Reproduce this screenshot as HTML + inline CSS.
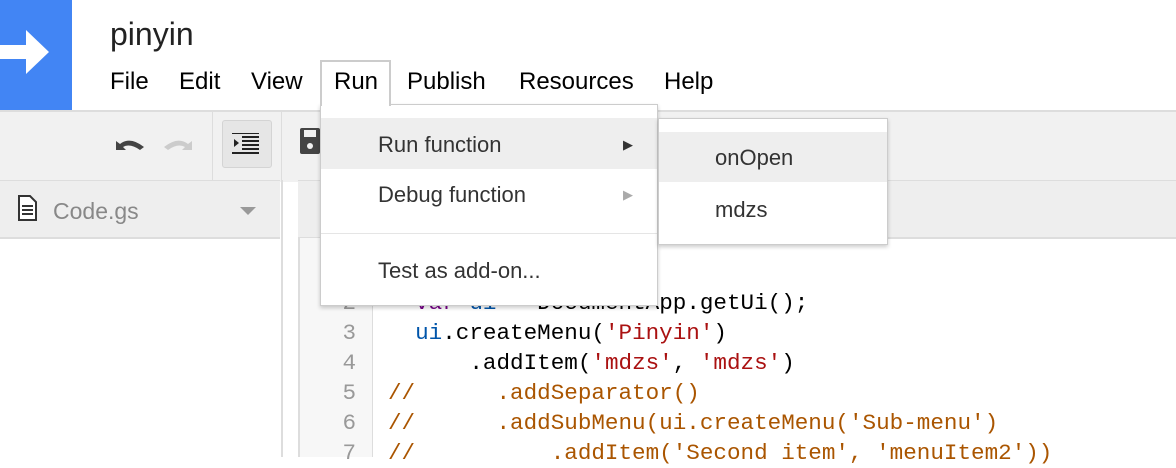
<!DOCTYPE html><html><head><style>
body{margin:0;width:1176px;height:457px;overflow:hidden;position:relative;background:#fff;font-family:"Liberation Sans",sans-serif}
.a{position:absolute}
.mono{font-family:"Liberation Mono","DejaVu Sans Mono",monospace;font-size:22.6px}
</style></head><body>
<div class="a" style="left:0;top:0;width:72px;height:110px;background:#4285f4"></div>
<svg class="a" style="left:0;top:28px" width="52" height="48"><path d="M0 17H26V2L49 24L26 46V31H0Z" fill="#fff"/></svg>
<div class="a" style="left:110px;top:16px;font-size:32px;color:#222">pinyin</div>
<div class="a" style="left:110px;top:68px;font-size:24px;color:#000">
<span class="a" style="left:0">File</span><span class="a" style="left:69px">Edit</span><span class="a" style="left:141px">View</span><span class="a" style="left:224px">Run</span><span class="a" style="left:297px">Publish</span><span class="a" style="left:409px">Resources</span><span class="a" style="left:554px">Help</span></div>
<div class="a" style="left:0;top:110px;width:1176px;height:70px;background:#f1f1f1;border-top:2px solid #ddd"></div>
<div class="a" style="left:212px;top:112px;width:1px;height:68px;background:#ddd"></div>
<div class="a" style="left:281px;top:112px;width:1px;height:68px;background:#ddd"></div>
<div class="a" style="left:0;top:180px;width:280px;height:56px;background:#eee;border-top:1px solid #ddd;border-bottom:2px solid #ddd"></div>
<div class="a" style="left:281px;top:180px;width:2px;height:277px;background:#ddd"></div>
<div class="a" style="left:298px;top:180px;width:878px;height:56px;background:#eee;border-top:1px solid #ddd;border-bottom:2px solid #ddd"></div>
<div class="a" style="left:298px;top:238px;width:72px;height:219px;background:#f7f7f7;border-left:2px solid #ddd;border-right:1px solid #ddd"></div>
<svg class="a" style="left:114px;top:134px" width="80" height="22"><path d="M2 16V7L6 10Q16 2 30 13L26 16Q16 9 9 13L12 16Z" fill="#444"/><path d="M78 16V7L74 10Q64 2 50 13L54 16Q64 9 71 13L68 16Z" fill="#ccc"/></svg>
<div class="a" style="left:222px;top:120px;width:50px;height:48px;background:#e6e6e6;border:1px solid #d4d4d4;border-radius:3px;box-sizing:border-box"></div>
<svg class="a" style="left:232px;top:133px" width="28" height="24"><path d="M0 0H27M10 4H27M10 8H27M10 12H27M10 16H27M0 20H27" stroke="#222" stroke-width="2"/><path d="M2 6L7 10L2 14Z" fill="#222"/></svg>
<svg class="a" style="left:300px;top:128px" width="20" height="28"><rect x="0" y="0" width="20" height="26" rx="2" fill="#444"/><rect x="4" y="2" width="12" height="7" fill="#f1f1f1"/><circle cx="10" cy="18" r="3" fill="#f1f1f1"/></svg>
<svg class="a" style="left:18px;top:195px" width="20" height="28"><path d="M1 1H12L18 7V25H1Z" fill="#fff" stroke="#333" stroke-width="2"/><path d="M4 11H15M4 15H15M4 19H15" stroke="#333" stroke-width="2"/></svg>
<div class="a" style="left:53px;top:198px;font-size:23px;color:#888">Code.gs</div>
<svg class="a" style="left:240px;top:207px" width="16" height="9"><path d="M0 0H16L8 8Z" fill="#999"/></svg>
<div class="a mono" style="left:298px;top:288px;width:58px;text-align:right;color:#999;line-height:30px">2<br>3<br>4<br>5<br>6<br>7</div>
<div class="a mono" style="left:388px;top:288px;line-height:30px;white-space:pre;color:#000">  <span style="color:#708">var</span> <span style="color:#05a">ui</span> = DocumentApp.getUi();
  <span style="color:#05a">ui</span>.createMenu(<span style="color:#a11">'Pinyin'</span>)
      .addItem(<span style="color:#a11">'mdzs'</span>, <span style="color:#a11">'mdzs'</span>)
<span style="color:#a50">//      .addSeparator()
//      .addSubMenu(ui.createMenu('Sub-menu')
//          .addItem('Second item', 'menuItem2'))</span></div>
<div class="a" style="left:320px;top:60px;width:71px;height:46px;background:#fff;border:2px solid #ccc;border-bottom:none;box-sizing:border-box;z-index:3"></div>
<div class="a" style="left:334px;top:68px;font-size:24px;z-index:4">Run</div>
<div class="a" style="left:320px;top:104px;width:338px;height:202px;background:#fff;border:1px solid #ccc;box-shadow:0 2px 4px rgba(0,0,0,.2);box-sizing:border-box;z-index:2;font-size:22px;color:#333">
<div class="a" style="left:0;top:13px;width:336px;height:51px;background:#eee"></div>
<div class="a" style="left:57px;top:27px">Run function</div><div class="a" style="left:302px;top:32px;font-size:13px">▶</div>
<div class="a" style="left:57px;top:77px">Debug function</div><div class="a" style="left:302px;top:82px;font-size:13px;color:#aaa">▶</div>
<div class="a" style="left:0;top:128px;width:336px;height:1px;background:#e5e5e5"></div>
<div class="a" style="left:57px;top:153px">Test as add-on...</div>
</div>
<div class="a" style="left:658px;top:118px;width:230px;height:127px;background:#fff;border:1px solid #ccc;box-shadow:0 2px 4px rgba(0,0,0,.2);box-sizing:border-box;z-index:5;font-size:22px;color:#333">
<div class="a" style="left:0;top:13px;width:228px;height:50px;background:#eee"></div>
<div class="a" style="left:56px;top:26px">onOpen</div>
<div class="a" style="left:56px;top:78px">mdzs</div>
</div>
</body></html>
